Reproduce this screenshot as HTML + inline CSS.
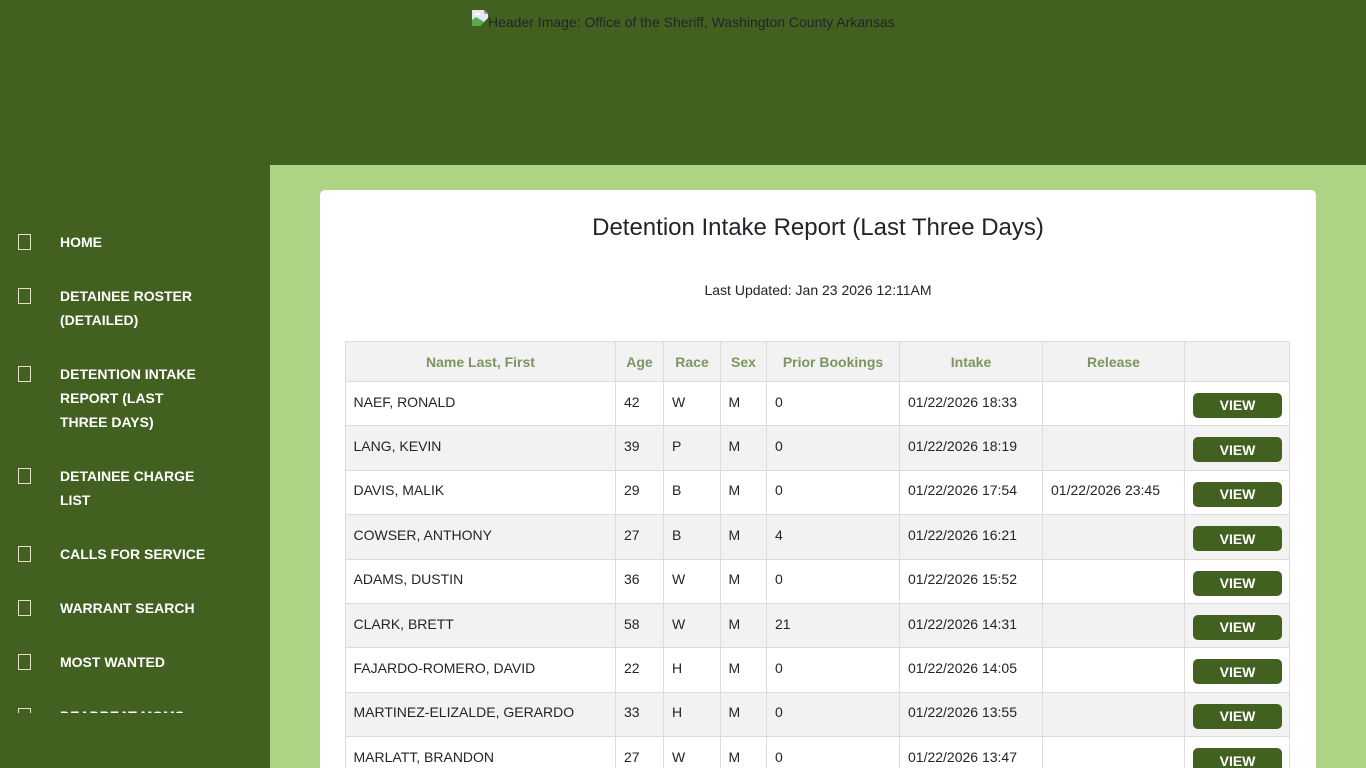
<!DOCTYPE html>
<html lang="en"><head><meta charset="utf-8"><title>Detention Intake Report</title>
<style>
html,body{margin:0;padding:0;width:1366px;height:768px;overflow:hidden;background:#426120;font-family:"Liberation Sans",sans-serif;color:#212529}
#page{position:absolute;left:0;top:0;width:1366px;height:768px;overflow:hidden;background:#426120}
#broken{position:absolute;left:472px;top:10px;width:16px;height:16px}
#alt{position:absolute;left:488px;top:14px;font-size:14px;line-height:17px;white-space:nowrap;color:#212529}
#main{position:absolute;left:270px;top:165px;width:1096px;height:603px;background:#add484}
#card{position:absolute;left:320px;top:190px;width:996px;height:578px;background:#fff;border-radius:5px 5px 0 0}
h1{position:absolute;left:320px;top:213px;width:996px;margin:0;text-align:center;font-weight:400;font-size:24px;line-height:30px;color:#212529}
#upd{position:absolute;left:320px;top:281px;width:996px;text-align:center;font-size:14px;line-height:18px}
#nav{position:absolute;left:0;top:220px;width:270px;height:493px;overflow:hidden}
.it{position:absolute;left:60px;width:150px;color:#fff;font-weight:700;font-size:14px;line-height:24px}
.ic{position:absolute;left:18px;width:11px;height:14px;border:1px solid #e4e2c4}
table{position:absolute;left:345px;top:341px;width:945px;border-collapse:collapse;table-layout:fixed;font-size:14px}
th,td{border:1px solid #dcdcdc;padding:0 8px;text-align:left;vertical-align:top;line-height:18px;white-space:nowrap;overflow:hidden}
td{padding-top:11px;box-sizing:border-box}
td:first-child{padding-left:7.5px}
td:nth-child(4){padding-left:7.5px}
tr.u td{padding-top:10px}
tr.u td.v{padding-top:11px}
th{background:#f2f2f2;color:#7c9560;font-weight:700;text-align:center;padding-top:11px;box-sizing:border-box;height:40px}
tbody tr:nth-child(even) td{background:#f2f2f2}
.b{display:block;width:89px;height:25px;background:#426120;color:#fff;border-radius:5px;font-weight:700;font-size:14px;line-height:25px;text-align:center}
tr.d .b{line-height:27px}
</style></head><body>
<div id="page">
<svg id="broken" viewBox="0 0 16 16"><path d="M0 0H12L16 4V8L8 16H0z" fill="#e4e8f6"/><path d="M0 16V10L4 7 9 10 12 12 8 16z" fill="#5aa84f"/><path d="M3 3h5v2H3z" fill="#fff"/><path d="M12 0L16 4H12z" fill="#9aa78c"/></svg>
<div id="alt">Header Image: Office of the Sheriff, Washington County Arkansas</div>
<div id="main"></div><div id="card"></div>
<div id="nav">
<span class="ic" style="top:14px"></span><div class="it" style="top:10px">HOME</div>
<span class="ic" style="top:68px"></span><div class="it" style="top:64px">DETAINEE ROSTER<br>(DETAILED)</div>
<span class="ic" style="top:146px"></span><div class="it" style="top:142px">DETENTION INTAKE<br>REPORT (LAST<br>THREE DAYS)</div>
<span class="ic" style="top:248px"></span><div class="it" style="top:244px">DETAINEE CHARGE<br>LIST</div>
<span class="ic" style="top:326px"></span><div class="it" style="top:322px">CALLS FOR SERVICE</div>
<span class="ic" style="top:380px"></span><div class="it" style="top:376px">WARRANT SEARCH</div>
<span class="ic" style="top:434px"></span><div class="it" style="top:430px">MOST WANTED</div>
<span class="ic" style="top:488px"></span><div class="it" style="top:484px">DEADBEAT MOMS</div>
</div>
<h1>Detention Intake Report (Last Three Days)</h1>
<div id="upd">Last Updated: Jan 23 2026 12:11AM</div>
<table>
<colgroup><col style="width:270px"><col style="width:48px"><col style="width:57px"><col style="width:46px"><col style="width:133px"><col style="width:143px"><col style="width:142px"><col style="width:105px"></colgroup>
<thead><tr><th>Name Last, First</th><th>Age</th><th>Race</th><th>Sex</th><th>Prior Bookings</th><th>Intake</th><th>Release</th><th></th></tr></thead>
<tbody>
<tr style="height:44px"><td>NAEF, RONALD</td><td>42</td><td>W</td><td>M</td><td>0</td><td>01/22/2026 18:33</td><td></td><td class="v"><span class="b">VIEW</span></td></tr>
<tr class="d" style="height:45px"><td>LANG, KEVIN</td><td>39</td><td>P</td><td>M</td><td>0</td><td>01/22/2026 18:19</td><td></td><td class="v"><span class="b">VIEW</span></td></tr>
<tr class="u" style="height:44px"><td>DAVIS, MALIK</td><td>29</td><td>B</td><td>M</td><td>0</td><td>01/22/2026 17:54</td><td>01/22/2026 23:45</td><td class="v"><span class="b">VIEW</span></td></tr>
<tr class="d" style="height:45px"><td>COWSER, ANTHONY</td><td>27</td><td>B</td><td>M</td><td>4</td><td>01/22/2026 16:21</td><td></td><td class="v"><span class="b">VIEW</span></td></tr>
<tr class="u" style="height:44px"><td>ADAMS, DUSTIN</td><td>36</td><td>W</td><td>M</td><td>0</td><td>01/22/2026 15:52</td><td></td><td class="v"><span class="b">VIEW</span></td></tr>
<tr style="height:44px"><td>CLARK, BRETT</td><td>58</td><td>W</td><td>M</td><td>21</td><td>01/22/2026 14:31</td><td></td><td class="v"><span class="b">VIEW</span></td></tr>
<tr class="d" style="height:45px"><td>FAJARDO-ROMERO, DAVID</td><td>22</td><td>H</td><td>M</td><td>0</td><td>01/22/2026 14:05</td><td></td><td class="v"><span class="b">VIEW</span></td></tr>
<tr class="u" style="height:44px"><td>MARTINEZ-ELIZALDE, GERARDO</td><td>33</td><td>H</td><td>M</td><td>0</td><td>01/22/2026 13:55</td><td></td><td class="v"><span class="b">VIEW</span></td></tr>
<tr class="d" style="height:45px"><td>MARLATT, BRANDON</td><td>27</td><td>W</td><td>M</td><td>0</td><td>01/22/2026 13:47</td><td></td><td class="v"><span class="b">VIEW</span></td></tr>
</tbody></table>
</div>
</body></html>
